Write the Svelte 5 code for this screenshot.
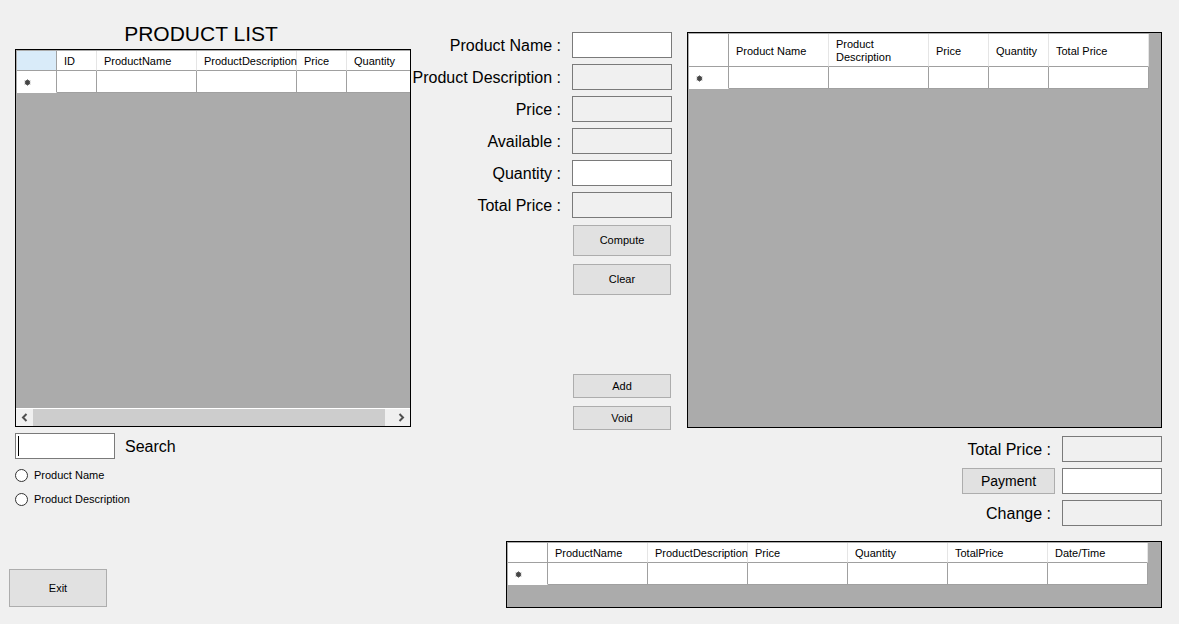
<script lang="ts">
  type Column = { label: string; width?: number };

  const products: Column[] = [
    { label: 'ID', width: 40 },
    { label: 'ProductName', width: 100 },
    { label: 'ProductDescription', width: 100 },
    { label: 'Price', width: 50 },
    { label: 'Quantity' },
  ];
  const cart: Column[] = [
    { label: 'Product Name', width: 100 },
    { label: 'Product Description', width: 100 },
    { label: 'Price', width: 60 },
    { label: 'Quantity', width: 60 },
    { label: 'Total Price', width: 100 },
  ];
  const sales: Column[] = ['ProductName', 'ProductDescription', 'Price', 'Quantity', 'TotalPrice', 'Date/Time']
    .map((label) => ({ label, width: 100 }));

  const fields = [
    { id: 'name', label: 'Product Name :', readonly: false },
    { id: 'description', label: 'Product Description :', readonly: true },
    { id: 'price', label: 'Price :', readonly: true },
    { id: 'available', label: 'Available :', readonly: true },
    { id: 'quantity', label: 'Quantity :', readonly: false },
    { id: 'total', label: 'Total Price :', readonly: true },
  ];

  let searchBy = $state('');
</script>

{#snippet dataTable(columns: Column[], kind: string)}
  <table class={kind}>
    <colgroup>
      <col class="marker-col" />
      {#each columns as column}
        <col style={column.width ? `width: ${column.width}px` : ''} />
      {/each}
    </colgroup>
    <thead>
      <tr>
        <th class="corner"></th>
        {#each columns as column}<th scope="col">{column.label}</th>{/each}
      </tr>
    </thead>
    <tbody>
      <tr>
        <td class="marker">
          <svg width="7" height="7" viewBox="0 0 7 7" aria-hidden="true">
            <path d="M3.5 0.5v6M0.7 2l5.6 3M0.7 5l5.6-3" />
            <circle cx="3.5" cy="3.5" r="2.2" />
          </svg>
        </td>
        {#each columns as _}<td></td>{/each}
      </tr>
    </tbody>
  </table>
{/snippet}

<main>
  <div class="workspace">
    <section class="catalog">
      <h1>PRODUCT LIST</h1>
      <div class="sheet catalog-sheet">
        {@render dataTable(products, 'fill')}
        <div class="scrollbar">
          <button type="button" aria-label="Scroll left">
            <svg width="7" height="9" viewBox="0 0 7 9"><path d="M5.5 1L2 4.5L5.5 8" /></svg>
          </button>
          <div class="track"><div class="thumb"></div></div>
          <button type="button" aria-label="Scroll right">
            <svg width="7" height="9" viewBox="0 0 7 9"><path d="M1.5 1L5 4.5L1.5 8" /></svg>
          </button>
        </div>
      </div>
      <div class="search">
        <input id="search" class="box caret" type="text" />
        <label for="search">Search</label>
      </div>
      <div class="options">
        <label><input type="radio" name="search-by" value="name" bind:group={searchBy} />Product Name</label>
        <label><input type="radio" name="search-by" value="description" bind:group={searchBy} />Product Description</label>
      </div>
    </section>

    <section class="entry">
      <div class="fields">
        {#each fields as field}
          <label for={field.id}>{field.label}</label>
          <input id={field.id} class="box" type="text" readonly={field.readonly} />
        {/each}
      </div>
      <div class="actions">
        <button type="button" class="push">Compute</button>
        <button type="button" class="push">Clear</button>
      </div>
      <div class="actions compact">
        <button type="button" class="push">Add</button>
        <button type="button" class="push">Void</button>
      </div>
    </section>

    <section class="checkout">
      <div class="sheet cart-sheet">{@render dataTable(cart, 'tall')}</div>
      <div class="fields">
        <label for="due">Total Price :</label>
        <input id="due" class="box" type="text" readonly />
        <button type="button" class="push pay">Payment</button>
        <input class="box" type="text" aria-label="Payment" />
        <label for="change">Change :</label>
        <input id="change" class="box" type="text" readonly />
      </div>
    </section>
  </div>

  <footer>
    <button type="button" class="push exit">Exit</button>
    <div class="sheet sales-sheet">{@render dataTable(sales, '')}</div>
  </footer>
</main>

<style>
  :global(body) {
    margin: 0;
    background: #f0f0f0;
  }
  main {
    box-sizing: border-box;
    min-height: 100vh;
    padding: 22px 17px 16px 9px;
    background: #f0f0f0;
    color: #000;
    font: 16px/24px "Liberation Sans", Arial, sans-serif;
  }
  button,
  input {
    box-sizing: border-box;
    margin: 0;
    font: inherit;
    color: inherit;
  }
  .workspace {
    display: grid;
    grid-template-columns: minmax(0, 402fr) 258px minmax(0, 487fr);
    column-gap: 3px;
  }
  .catalog {
    padding-left: 6px;
  }
  h1 {
    margin: 0 0 3px;
    padding-right: 24px;
    font-size: 21px;
    font-weight: 400;
    line-height: 24px;
    text-align: center;
  }

  .sheet {
    box-sizing: border-box;
    display: flex;
    flex-direction: column;
    align-items: flex-start;
    padding: 1px 0 0 1px;
    border: 1px solid #000;
    background: #ababab;
  }
  .catalog-sheet {
    height: 378px;
  }
  .cart-sheet {
    height: 396px;
  }
  .sales-sheet {
    flex: 0 1 656px;
    height: 67px;
  }

  table {
    table-layout: fixed;
    width: min-content;
    border-spacing: 0;
    background: #fff;
  }
  table,
  .options,
  .push {
    font-size: 11px;
    line-height: 13px;
  }
  .fill {
    width: 100%;
  }
  .marker-col {
    width: 40px;
  }
  th,
  td {
    box-sizing: border-box;
    padding: 0 0 0 7px;
    border-right: 1px solid #a0a0a0;
    border-bottom: 1px solid #a0a0a0;
    font-weight: 400;
    text-align: left;
    white-space: nowrap;
  }
  th {
    height: 20px;
    padding-top: 2px;
    border-right-color: #e5e5e5;
  }
  td {
    height: 22px;
  }
  .tall th {
    height: 33px;
    white-space: normal;
  }
  th.corner {
    border-right-color: #a0a0a0;
  }
  td.marker {
    border-bottom-color: #fff;
    padding-top: 2px;
  }
  .marker svg {
    display: block;
    fill: #444;
    stroke: #555;
  }
  .fill .corner {
    background: #d9ebf9;
  }
  .fill th:last-child,
  .fill td:last-child {
    border-right: 0;
  }

  .scrollbar {
    display: flex;
    align-self: stretch;
    margin-top: auto;
    margin-left: -1px;
    height: 17px;
    border-top: 1px solid #fff;
    background: #f0f0f0;
  }
  .scrollbar button {
    display: flex;
    align-items: center;
    justify-content: center;
    width: 17px;
    padding: 0;
    border: 0;
    background: none;
  }
  .scrollbar path {
    fill: none;
    stroke: #505050;
    stroke-width: 2;
  }
  .track {
    flex: 1;
    padding-right: 8px;
  }
  .thumb {
    height: 100%;
    background: #cdcdcd;
  }

  .box {
    width: 100px;
    height: 26px;
    padding: 0 4px;
    border: 1px solid #7a7a7a;
    border-radius: 0;
    background: #fff;
  }
  .box:read-only {
    background: #f0f0f0;
  }
  .caret:not(:focus) {
    background: #fff linear-gradient(#000, #000) 2px 2px / 1px 20px no-repeat;
  }
  .search {
    display: flex;
    align-items: center;
    gap: 10px;
    margin-top: 6px;
  }
  .search label,
  .fields label {
    padding-top: 2px;
  }
  .options {
    display: grid;
    grid-auto-rows: 24px;
    align-items: center;
    justify-items: start;
    margin-top: 4px;
  }
  .options label {
    display: flex;
    align-items: center;
    gap: 6px;
  }
  .options input {
    appearance: none;
    width: 13px;
    height: 13px;
    border: 1px solid #333;
    border-radius: 50%;
    background: #fff;
  }
  .options input:checked {
    background: radial-gradient(circle, #333 3px, #fff 4px);
  }

  .entry,
  .checkout {
    padding-top: 10px;
  }
  .checkout {
    padding-left: 12px;
  }
  .fields {
    display: grid;
    grid-template-columns: auto 100px;
    justify-content: end;
    align-items: center;
    gap: 6px 11px;
    text-align: right;
    white-space: nowrap;
  }
  .checkout .fields {
    column-gap: 7px;
    margin-top: 8px;
  }
  .checkout .fields label {
    padding-right: 4px;
  }
  .push {
    padding: 0;
    border: 1px solid #adadad;
    border-radius: 0;
    background: #e1e1e1;
    text-align: center;
  }
  .actions {
    display: grid;
    grid-template-columns: 98px;
    grid-auto-rows: 31px;
    justify-content: end;
    gap: 8px;
    margin-top: 7px;
    padding-right: 1px;
  }
  .compact {
    grid-auto-rows: 24px;
    margin-top: 79px;
  }
  .pay {
    width: 93px;
    height: 26px;
    font-size: 14px;
  }
  footer {
    display: flex;
    align-items: flex-end;
    justify-content: space-between;
    margin-top: 15px;
  }
  .exit {
    width: 98px;
    height: 38px;
    margin-bottom: 1px;
  }
</style>
